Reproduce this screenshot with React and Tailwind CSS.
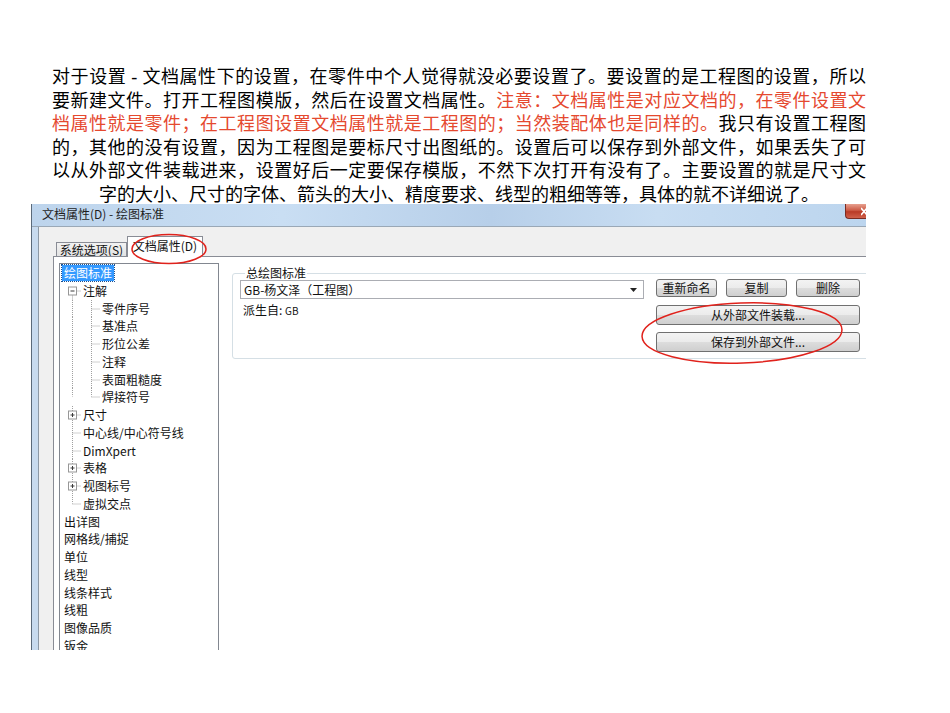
const UI = "font-['Noto_Sans_CJK_SC',sans-serif]";

const treeItems = [
  { t: '绘图标准', l: 0, sel: true },
  { t: '注解', l: 1, box: '-', first: true },
  { t: '零件序号', l: 2 },
  { t: '基准点', l: 2 },
  { t: '形位公差', l: 2 },
  { t: '注释', l: 2 },
  { t: '表面粗糙度', l: 2 },
  { t: '焊接符号', l: 2, last: true },
  { t: '尺寸', l: 1, box: '+' },
  { t: '中心线/中心符号线', l: 1 },
  { t: 'DimXpert', l: 1 },
  { t: '表格', l: 1, box: '+' },
  { t: '视图标号', l: 1, box: '+' },
  { t: '虚拟交点', l: 1, last: true },
  { t: '出详图', l: 0 },
  { t: '网格线/捕捉', l: 0 },
  { t: '单位', l: 0 },
  { t: '线型', l: 0 },
  { t: '线条样式', l: 0 },
  { t: '线粗', l: 0 },
  { t: '图像品质', l: 0 },
  { t: '钣金', l: 0 },
];

const H = 17.75;
const MID = 8.5;
const dot = { stroke: '#a0a0a0', strokeWidth: 1, strokeDasharray: '1 1' };

// guide for level-1 rows (and the pass-through line for level-2 rows)
function GuideA({ item }) {
  const passThrough = item.l === 2;
  let y1 = 0;
  let y2 = H;
  if (item.first) y1 = MID;
  if (item.last) y2 = MID;
  return (
    <svg width="22" height={H} className="shrink-0">
      <line x1="12.5" y1={y1} x2="12.5" y2={y2} {...dot} />
      {!passThrough && <line x1="12.5" y1={MID + 0.5} x2="21" y2={MID + 0.5} {...dot} />}
      {item.box && (
        <g>
          <rect x="8.5" y={MID - 3.5} width="8" height="8" fill="#fff" stroke="#979797" />
          <line x1="10.5" y1={MID + 0.5} x2="14.5" y2={MID + 0.5} stroke="#3b3b3b" />
          {item.box === '+' && <line x1="12.5" y1={MID - 1.5} x2="12.5" y2={MID + 2.5} stroke="#3b3b3b" />}
        </g>
      )}
    </svg>
  );
}

function GuideB({ item }) {
  return (
    <svg width="20" height={H} className="shrink-0">
      <line x1="9.5" y1="0" x2="9.5" y2={item.last ? MID : H} {...dot} />
      <line x1="9.5" y1={MID + 0.5} x2="18" y2={MID + 0.5} {...dot} />
    </svg>
  );
}

function TreeRow({ item }) {
  return (
    <div className="flex items-center h-[17.75px] text-[12px] leading-[17.75px] text-[#111]">
      {item.l === 0 ? (
        item.sel ? (
          <span className="ml-[2px] px-[2px] bg-[#3399ff] text-white leading-[16px] outline-1 outline-dotted outline-[#1a4f8f]">
            {item.t}
          </span>
        ) : (
          <span className="pl-[4px]">{item.t}</span>
        )
      ) : (
        <>
          <GuideA item={item} />
          {item.l === 2 && <GuideB item={item} />}
          <span className={item.l === 1 ? 'ml-[1px]' : ''}>{item.t}</span>
        </>
      )}
    </div>
  );
}

function Btn({ className = '', children }) {
  return (
    <div
      className={`flex items-center justify-center border border-[#707070] rounded-[3px] bg-[linear-gradient(#f3f3f3,#ebebeb_50%,#dddddd_50%,#cfcfcf)] text-[12px] leading-none text-[#111] ${className}`}
    >
      {children}
    </div>
  );
}

function Dialog() {
  return (
    <div className={`relative -mt-[3px] ml-[31px] w-[835px] h-[446px] overflow-hidden flex flex-col border-l border-[#5b6a7a] ${UI}`}>
      {/* title bar */}
      <div className="h-[23px] shrink-0 flex items-start border-b border-[#9aa8b6] bg-[linear-gradient(90deg,#bdd4ec,#c9def3_30%,#b7cfe9_55%,#c8ddf2_75%,#bcd5ee)]">
        <span className="pl-[10px] pt-[3px] text-[12px] leading-[14px] text-[#1e1e1e]">文档属性(D) - 绘图标准</span>
        <div className="ml-auto w-[21px] h-[15px] rounded-bl-[4px] border border-t-0 border-r-0 border-[#7a2c22] bg-[linear-gradient(#e7a08f,#cc5a45_45%,#b93a26_55%,#d0604a)] flex items-center justify-end overflow-hidden">
          <svg width="6" height="9" className="-mr-[1px]">
            <path d="M0 1 L6 8 M6 1 L0 8" stroke="#fff" strokeWidth="1.6" />
          </svg>
        </div>
      </div>

      <div className="flex-1 flex min-w-0">
        {/* window frame stripe */}
        <div className="w-[7px] shrink-0 bg-[#c8dbef] border-r border-[#8d99a6]" />

        {/* client area */}
        <div className="flex-1 min-w-0 bg-[#f0f0f0] pl-[14px] flex flex-col">
          {/* tab strip */}
          <div className="h-[29px] shrink-0 flex items-end pl-[3px]">
            <div className="h-[14px] w-[71px] border border-b-0 border-[#898c95] bg-[linear-gradient(#f2f2f2,#e3e3e3)] text-[12px] leading-[13px] text-center text-[#111]">
              系统选项(S)
            </div>
            <div className="relative z-10 -mb-px h-[21px] w-[76px] border border-b-0 border-[#898c95] bg-white text-[12px] leading-[13px] text-center pt-[2px] text-[#111]">
              文档属性(D)
            </div>
          </div>

          {/* tab panel */}
          <div className="flex-1 bg-white border-t border-l border-[#898c95] flex items-start pl-[5px]">
            <div className="mt-[6px] w-[160px] h-[400px] shrink-0 border border-[#828790] bg-white">
              {treeItems.map((it) => (
                <TreeRow key={it.t} item={it} />
              ))}
            </div>

            <fieldset className="ml-[13px] mt-[9px] w-[660px] shrink-0 border border-[#d5dfe5] rounded-[3px] px-[7px] pb-[6px]">
              <legend className="ml-[5px] px-[1px] text-[12px] leading-[14px] text-[#111]">总绘图标准</legend>
              <div className="flex items-start">
                <div className="flex flex-col">
                  <div className="w-[404px] h-[19px] border border-[#abadb3] bg-white flex items-center pl-[3px] pr-[6px] text-[12px] leading-none text-[#111]">
                    <span className="flex-1">GB-杨文泽（工程图）</span>
                    <svg width="7" height="4">
                      <path d="M0 0 H7 L3.5 4 Z" fill="#222" />
                    </svg>
                  </div>
                  <div className="mt-[5px] pl-[3px] text-[12px] leading-[12px] text-[#111]">
                    派生自: <span className="text-[10px]">GB</span>
                  </div>
                </div>
                <div className="ml-[12px] -mt-px flex flex-col">
                  <div className="flex gap-[9px]">
                    <Btn className="w-[61px] h-[18px]">重新命名</Btn>
                    <Btn className="w-[61px] h-[18px]">复制</Btn>
                    <Btn className="w-[64px] h-[18px]">删除</Btn>
                  </div>
                  <Btn className="mt-[8px] w-[204px] h-[20px]">从外部文件装载...</Btn>
                  <Btn className="mt-[7px] w-[204px] h-[20px]">保存到外部文件...</Btn>
                </div>
              </div>
            </fieldset>
          </div>
        </div>
      </div>

      {/* hand-drawn red marks */}
      <svg className="absolute inset-0 z-20 pointer-events-none" width="835" height="446">
        <ellipse cx="137" cy="45" rx="37" ry="14.5" fill="none" stroke="#e0221c" strokeWidth="1.5" />
        <ellipse
          cx="710"
          cy="129"
          rx="100"
          ry="30"
          fill="none"
          stroke="#e0221c"
          strokeWidth="1.5"
          transform="rotate(-2 710 129)"
        />
      </svg>
    </div>
  );
}

export default function App() {
  const line = "text-justify [text-align-last:justify]";
  const red = 'text-[#e5492f]';
  return (
    <div className="w-[950px] h-[713px] bg-white overflow-hidden">
      <div className="pl-[52px] pt-[66px] w-[866px] text-[18px] leading-[23.5px] text-black font-['Liberation_Serif','Noto_Sans_CJK_SC',serif]">
        <div className={line}>对于设置 - 文档属性下的设置，在零件中个人觉得就没必要设置了。要设置的是工程图的设置，所以</div>
        <div className={line}>
          要新建文件。打开工程图模版，然后在设置文档属性。<span className={red}>注意：文档属性是对应文档的，在零件设置文</span>
        </div>
        <div className={line}>
          <span className={red}>档属性就是零件；在工程图设置文档属性就是工程图的；当然装配体也是同样的。</span>我只有设置工程图
        </div>
        <div className={line}>的，其他的没有设置，因为工程图是要标尺寸出图纸的。设置后可以保存到外部文件，如果丢失了可</div>
        <div className={line}>以从外部文件装载进来，设置好后一定要保存模版，不然下次打开有没有了。主要设置的就是尺寸文</div>
        <div className="text-center">字的大小、尺寸的字体、箭头的大小、精度要求、线型的粗细等等，具体的就不详细说了。</div>
      </div>
      <Dialog />
    </div>
  );
}
